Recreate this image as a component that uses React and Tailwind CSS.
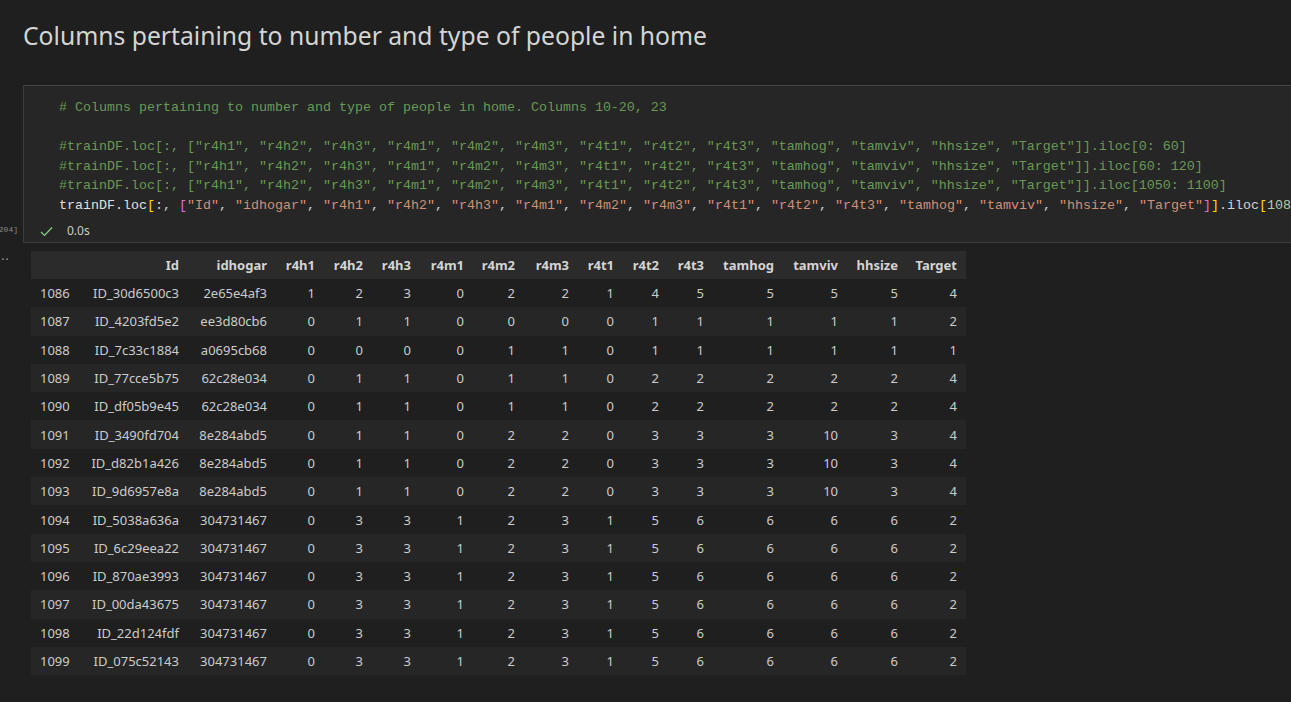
import React from "react";

const cols = [
  { k: "", w: 49 },
  { k: "Id", w: 108 },
  { k: "idhogar", w: 88 },
  { k: "r4h1", w: 48 },
  { k: "r4h2", w: 48 },
  { k: "r4h3", w: 48 },
  { k: "r4m1", w: 53 },
  { k: "r4m2", w: 51 },
  { k: "r4m3", w: 54 },
  { k: "r4t1", w: 45 },
  { k: "r4t2", w: 45 },
  { k: "r4t3", w: 45 },
  { k: "tamhog", w: 70 },
  { k: "tamviv", w: 64 },
  { k: "hhsize", w: 60 },
  { k: "Target", w: 59 },
];

const rows = [
  "1086 ID_30d6500c3 2e65e4af3 1 2 3 0 2 2 1 4 5 5 5 5 4",
  "1087 ID_4203fd5e2 ee3d80cb6 0 1 1 0 0 0 0 1 1 1 1 1 2",
  "1088 ID_7c33c1884 a0695cb68 0 0 0 0 1 1 0 1 1 1 1 1 1",
  "1089 ID_77cce5b75 62c28e034 0 1 1 0 1 1 0 2 2 2 2 2 4",
  "1090 ID_df05b9e45 62c28e034 0 1 1 0 1 1 0 2 2 2 2 2 4",
  "1091 ID_3490fd704 8e284abd5 0 1 1 0 2 2 0 3 3 3 10 3 4",
  "1092 ID_d82b1a426 8e284abd5 0 1 1 0 2 2 0 3 3 3 10 3 4",
  "1093 ID_9d6957e8a 8e284abd5 0 1 1 0 2 2 0 3 3 3 10 3 4",
  "1094 ID_5038a636a 304731467 0 3 3 1 2 3 1 5 6 6 6 6 2",
  "1095 ID_6c29eea22 304731467 0 3 3 1 2 3 1 5 6 6 6 6 2",
  "1096 ID_870ae3993 304731467 0 3 3 1 2 3 1 5 6 6 6 6 2",
  "1097 ID_00da43675 304731467 0 3 3 1 2 3 1 5 6 6 6 6 2",
  "1098 ID_22d124fdf 304731467 0 3 3 1 2 3 1 5 6 6 6 6 2",
  "1099 ID_075c52143 304731467 0 3 3 1 2 3 1 5 6 6 6 6 2",
].map((r) => r.split(" "));

const commentCols =
  '["r4h1", "r4h2", "r4h3", "r4m1", "r4m2", "r4m3", "r4t1", "r4t2", "r4t3", "tamhog", "tamviv", "hhsize", "Target"]]';

const lastStrings = [
  "Id",
  "idhogar",
  "r4h1",
  "r4h2",
  "r4h3",
  "r4m1",
  "r4m2",
  "r4m3",
  "r4t1",
  "r4t2",
  "r4t3",
  "tamhog",
  "tamviv",
  "hhsize",
  "Target",
];

function CodeLine({ children }) {
  return <div className="h-[19.5px] leading-[19.5px] whitespace-pre">{children}</div>;
}

export default function App() {
  return (
    <div className="w-full h-[702px] overflow-hidden bg-[#1f1f1f] text-[#cccccc]">
      <div
        className="pl-[23px] pt-[19px] h-[33px] leading-[33px] text-[24.7px] text-[#d4d4d4] box-content"
        style={{ fontFamily: '"Noto Sans", "Open Sans", sans-serif' }}
      >
        Columns pertaining to number and type of people in home
      </div>

      <div className="flex mt-[33px] h-[158px]">
        <div className="w-[23px] shrink-0 overflow-hidden flex flex-col justify-end">
          <div
            className="flex justify-end h-[21px] mb-[3px] leading-[21px] text-[8px] text-[#8a8a8a] whitespace-nowrap"
            style={{ fontFamily: '"Liberation Mono", monospace' }}
          >
            <span className="pr-[5px]">[204]</span>
          </div>
        </div>
        <div className="flex-1 min-w-0 bg-[#262626] border-l border-t border-b border-[#3c3c3c] border-t-[#454545] overflow-hidden">
          <div
            className="pt-[12px] pl-[35px] text-[13.33px] text-[#d4d4d4]"
            style={{ fontFamily: '"Liberation Mono", monospace' }}
          >
            <CodeLine>
              <span className="text-[#6a9955]"># Columns pertaining to number and type of people in home. Columns 10-20, 23</span>
            </CodeLine>
            <CodeLine> </CodeLine>
            <CodeLine>
              <span className="text-[#6a9955]">#trainDF.loc[:, {commentCols}.iloc[0: 60]</span>
            </CodeLine>
            <CodeLine>
              <span className="text-[#6a9955]">#trainDF.loc[:, {commentCols}.iloc[60: 120]</span>
            </CodeLine>
            <CodeLine>
              <span className="text-[#6a9955]">#trainDF.loc[:, {commentCols}.iloc[1050: 1100]</span>
            </CodeLine>
            <CodeLine>
              <span className="text-[#e0e0e0]">trainDF.loc</span>
              <span className="text-[#ffd700]">[</span>
              <span>:, </span>
              <span className="text-[#da70d6]">[</span>
              {lastStrings.map((s, i) => (
                <React.Fragment key={s}>
                  <span className="text-[#ce9178]">"{s}"</span>
                  {i < lastStrings.length - 1 ? <span>, </span> : null}
                </React.Fragment>
              ))}
              <span className="text-[#da70d6]">]</span>
              <span className="text-[#ffd700]">]</span>
              <span>.iloc</span>
              <span className="text-[#ffd700]">[</span>
              <span className="text-[#b5cea8]">1086</span>
              <span>: </span>
              <span className="text-[#b5cea8]">1100</span>
              <span className="text-[#ffd700]">]</span>
            </CodeLine>
          </div>
          <div className="flex items-center h-[20px] mt-[6px] pl-[16px]">
            <svg width="13" height="11" viewBox="0 0 13 11" className="shrink-0">
              <path d="M1 6 L4.5 9.5 L12 1.5" fill="none" stroke="#89d185" strokeWidth="1.2" />
            </svg>
            <span
              className="ml-[14px] text-[12px] text-[#cccccc]"
              style={{ fontFamily: '"Noto Sans", "Open Sans", sans-serif' }}
            >
              0.0s
            </span>
          </div>
        </div>
      </div>

      <div className="flex mt-[8px]">
        <div className="w-[31px] shrink-0 relative">
          <div className="h-[18px] leading-[18px] text-[12px] text-[#a0a0a0] tracking-[1px] -ml-[3px]">
            ···
          </div>
        </div>
        <table
          className="table-fixed border-collapse text-[13px] text-[#cccccc]"
          style={{ fontFamily: '"Noto Sans", "Open Sans", sans-serif' }}
        >
          <thead>
            <tr className="bg-[#2b2b2b] h-[28px]">
              {cols.map((c, i) => (
                <th
                  key={i}
                  style={{ width: c.w }}
                  className="p-0 pr-[9px] text-right font-bold text-[#d4d4d4] leading-[28px]"
                >
                  {c.k}
                </th>
              ))}
            </tr>
          </thead>
          <tbody>
            {rows.map((r, ri) => (
              <tr key={ri} className={ri % 2 === 1 ? "bg-[#262626] h-[28.3px]" : "bg-[#1f1f1f] h-[28.3px]"}>
                {r.map((v, ci) => (
                  <td
                    key={ci}
                    className={
                      ci === 0
                        ? "p-0 pl-[9px] text-left leading-[28px]"
                        : "p-0 pr-[9px] text-right leading-[28px]"
                    }
                  >
                    {v}
                  </td>
                ))}
              </tr>
            ))}
          </tbody>
        </table>
      </div>
    </div>
  );
}
